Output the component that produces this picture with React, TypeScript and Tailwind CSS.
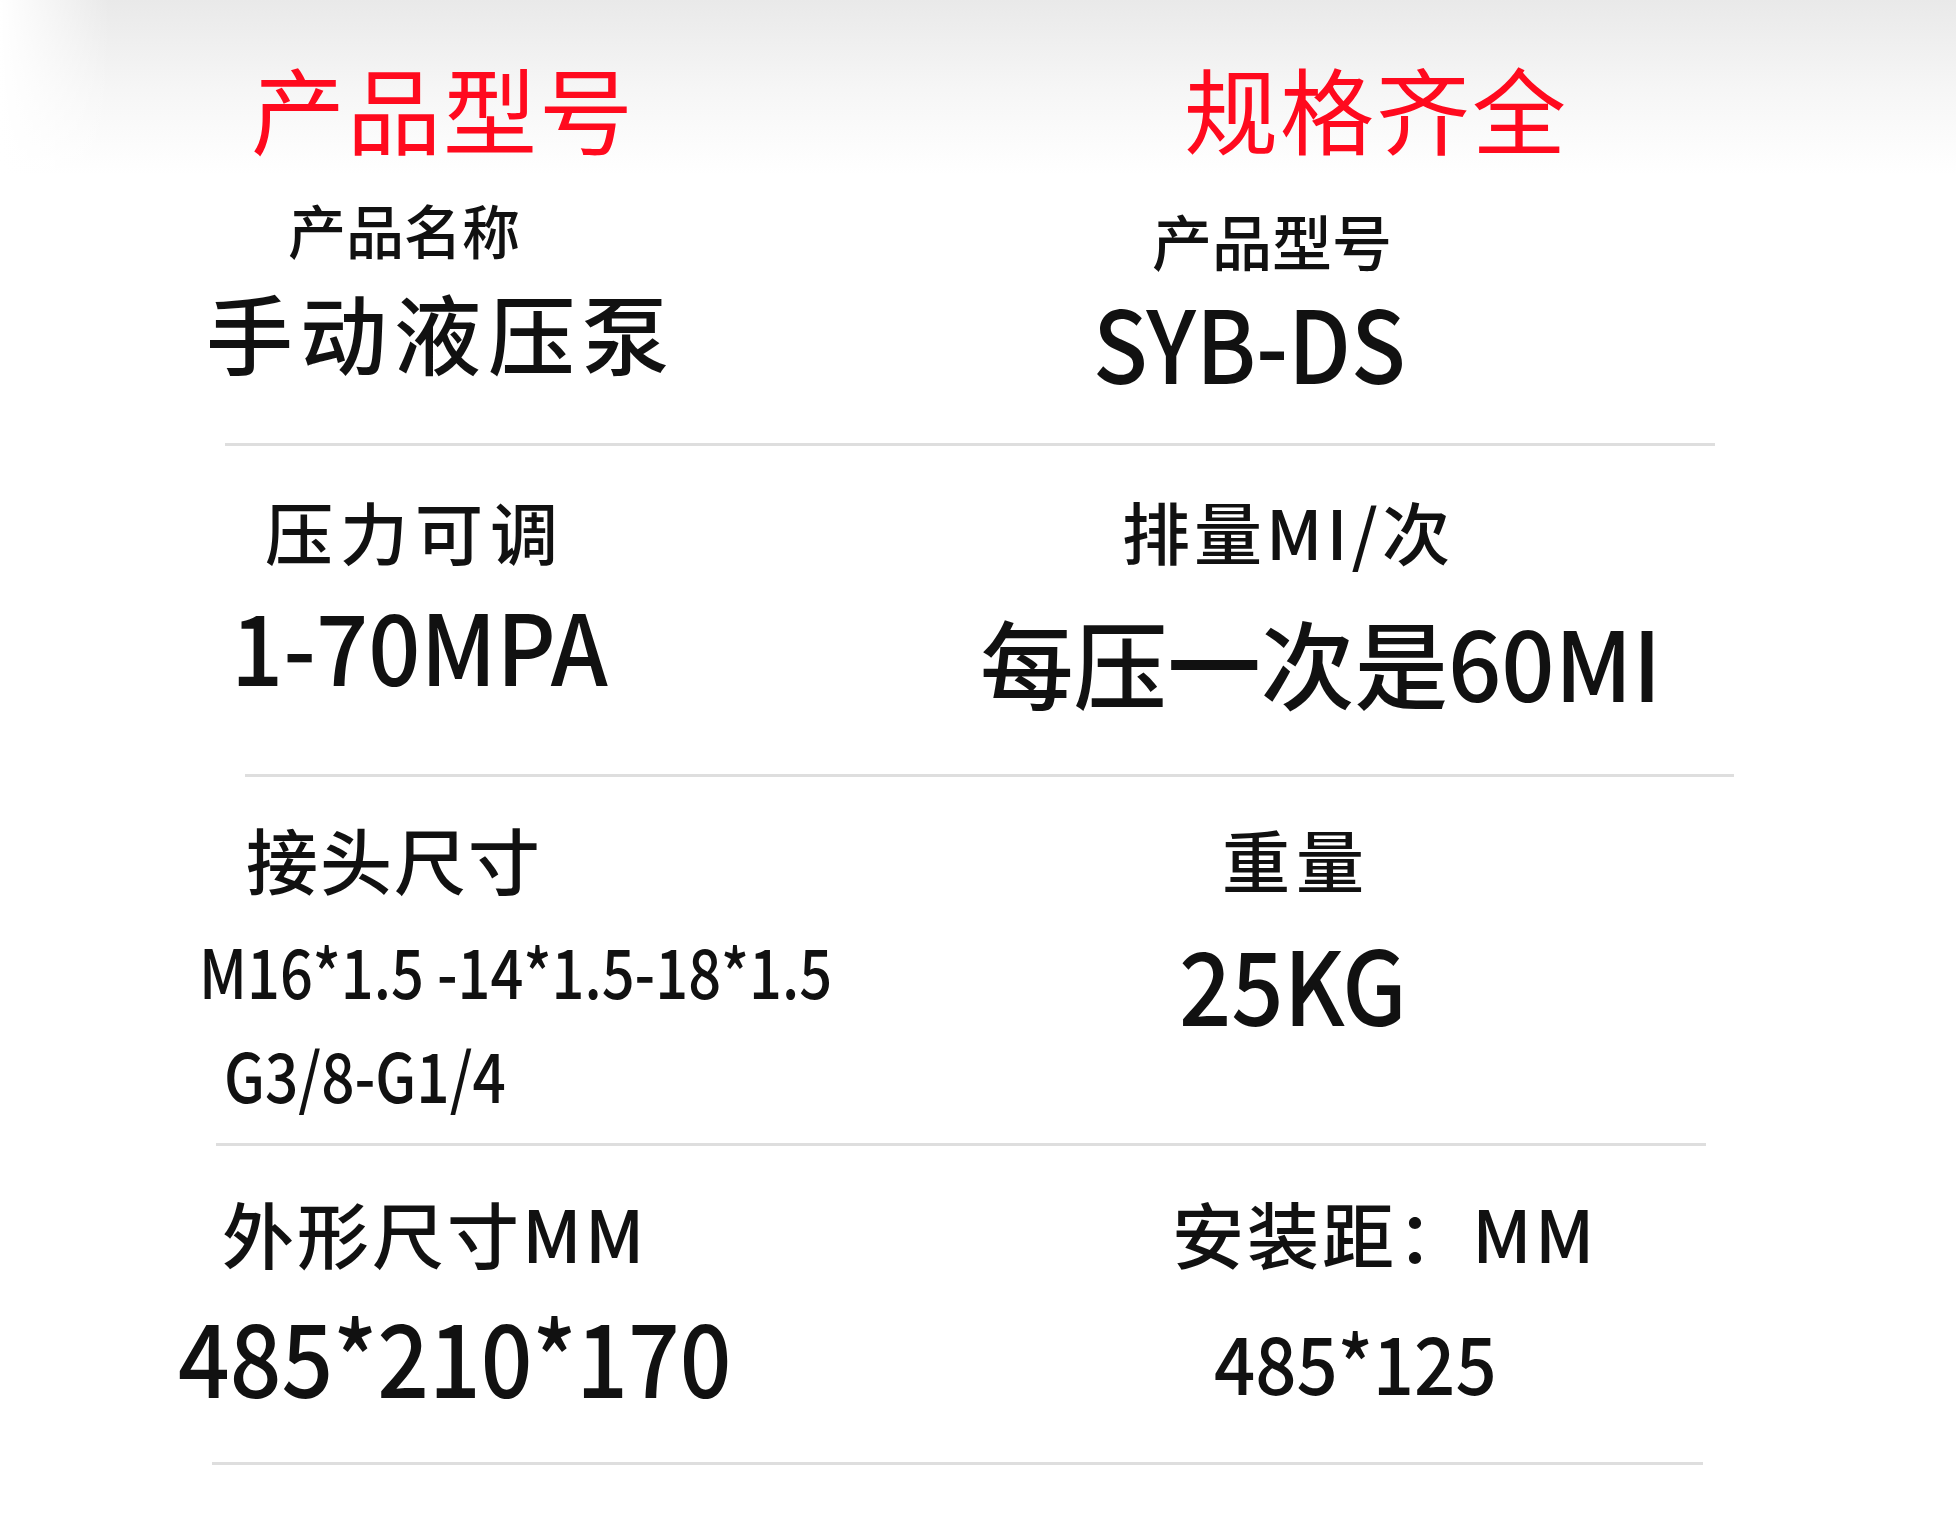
import React from "react";

const font = "font-['Noto_Sans_CJK_SC','Noto_Sans',sans-serif]";

const Rule = ({ className }: { className: string }) => (
  <div className={`h-[3px] bg-[#dedede] ${className}`} />
);

const App = () => {
  return (
    <div
      className={`w-[1956px] h-[1524px] overflow-hidden text-[#111] leading-none font-medium ${font} bg-[linear-gradient(to_right,white_0px,rgba(255,255,255,0)_110px),linear-gradient(to_bottom,#e9e9e9_0px,#f6f6f6_90px,white_175px)]`}
    >
      {/* header */}
      <div className="grid grid-cols-2 h-[190px]">
        <div className="pt-[60px] pl-[251px]">
          <h2 className="text-[94px] leading-none font-normal tracking-[2px] text-[#ff0a1e]">产品型号</h2>
        </div>
        <div className="pt-[60px] pl-[206px]">
          <h2 className="text-[94px] leading-none font-normal tracking-[2px] text-[#ff0a1e]">规格齐全</h2>
        </div>
      </div>

      {/* row 1 */}
      <div className="grid grid-cols-2 h-[253px]">
        <div className="flex flex-col items-start pt-[10px]">
          <p className="ml-[288px] text-[58px]">产品名称</p>
          <p className="ml-[206px] mt-[30px] text-[87px] tracking-[7px]">手动液压泵</p>
        </div>
        <div className="flex flex-col items-start pt-[20px]">
          <p className="ml-[174px] text-[60px]">产品型号</p>
          <p className="ml-[115px] mt-[21px] text-[100px] origin-left scale-x-[0.9]">SYB-DS</p>
        </div>
      </div>
      <Rule className="ml-[225px] w-[1490px]" />

      {/* row 2 */}
      <div className="grid grid-cols-2 h-[328px]">
        <div className="flex flex-col items-start pt-[51px]">
          <p className="ml-[265px] text-[68px] tracking-[7px]">压力可调</p>
          <p className="ml-[231px] mt-[29px] text-[98px] origin-left scale-x-[0.935]">1-70MPA</p>
        </div>
        <div className="flex flex-col items-start pt-[51px]">
          <p className="ml-[144px] text-[68px] tracking-[4px]">排量MI/次</p>
          <p className="ml-[2px] mt-[48px] text-[96px] origin-left scale-x-[0.975]">每压一次是60MI</p>
        </div>
      </div>
      <Rule className="ml-[245px] w-[1489px]" />

      {/* row 3 */}
      <div className="grid grid-cols-2 h-[366px]">
        <div className="flex flex-col items-start pt-[45px]">
          <p className="ml-[246px] text-[72px] tracking-[2px]">接头尺寸</p>
          <p className="ml-[199px] mt-[42px] text-[68px] origin-left scale-x-[0.85]">M16*1.5 -14*1.5-18*1.5</p>
          <p className="ml-[224px] mt-[36px] text-[68px] origin-left scale-x-[0.86]">G3/8-G1/4</p>
        </div>
        <div className="flex flex-col items-start pt-[48px]">
          <p className="ml-[244px] text-[68px] tracking-[6px]">重量</p>
          <p className="ml-[201px] mt-[38px] text-[102px] origin-left scale-x-[0.9]">25KG</p>
        </div>
      </div>
      <Rule className="ml-[216px] w-[1490px]" />

      {/* row 4 */}
      <div className="grid grid-cols-2 h-[316px]">
        <div className="flex flex-col items-start pt-[50px]">
          <p className="ml-[222px] text-[72px] tracking-[3px]">外形尺寸MM</p>
          <p className="ml-[178px] mt-[35px] text-[102px] origin-left scale-x-[0.89]">485*210*170</p>
        </div>
        <div className="flex flex-col items-start pt-[50px]">
          <p className="ml-[194px] text-[72px] tracking-[3px]">安装距：MM</p>
          <p className="ml-[236px] mt-[52px] text-[80px] origin-left scale-x-[0.905]">485*125</p>
        </div>
      </div>
      <Rule className="ml-[212px] w-[1491px]" />
    </div>
  );
};

export default App;
